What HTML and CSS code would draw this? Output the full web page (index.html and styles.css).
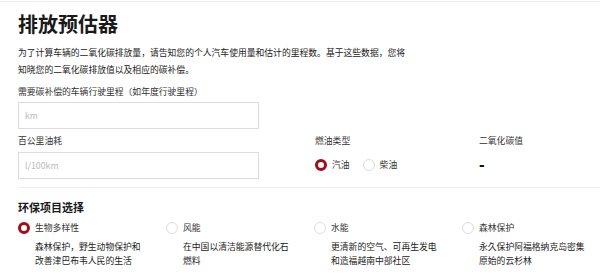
FILE: index.html
```html
<!DOCTYPE html>
<html lang="zh-CN">
<head>
<meta charset="utf-8">
<title>排放预估器</title>
<link rel="stylesheet" href="styles.css">
</head>
<body>
<div class="page">
  <h1 class="title">排放预估器</h1>
  <p class="intro">为了计算车辆的二氧化碳排放量，请告知您的个人汽车使用量和估计的里程数。基于这些数据，您将知晓您的二氧化碳排放值以及相应的碳补偿。</p>

  <div class="field">
    <div class="label">需要碳补偿的车辆行驶里程（如年度行驶里程）</div>
    <input class="input" type="text" placeholder="km">
  </div>

  <div class="row">
    <div class="field field-second">
      <div class="label">百公里油耗</div>
      <input class="input input-second" type="text" placeholder="l/100km">
    </div>
    <div class="col-fuel">
      <div class="label">燃油类型</div>
      <div class="radios">
        <span class="radio-item"><span class="radio radio-on"></span><span class="radio-text">汽油</span></span>
        <span class="radio-item"><span class="radio"></span><span class="radio-text">柴油</span></span>
      </div>
    </div>
    <div class="col-co2">
      <div class="label">二氧化碳值</div>
      <div class="co2-value">-</div>
    </div>
  </div>

  <div class="divider"></div>

  <h2 class="section-title">环保项目选择</h2>
  <div class="options">
    <div class="option">
      <div class="option-head"><span class="radio radio-on"></span><span class="option-name">生物多样性</span></div>
      <div class="option-desc">森林保护，野生动物保护和改善津巴布韦人民的生活</div>
    </div>
    <div class="option">
      <div class="option-head"><span class="radio"></span><span class="option-name">风能</span></div>
      <div class="option-desc">在中国以清洁能源替代化石燃料</div>
    </div>
    <div class="option">
      <div class="option-head"><span class="radio"></span><span class="option-name">水能</span></div>
      <div class="option-desc">更清新的空气、可再生发电和造福越南中部社区</div>
    </div>
    <div class="option">
      <div class="option-head"><span class="radio"></span><span class="option-name">森林保护</span></div>
      <div class="option-desc">永久保护阿福格纳克岛密集原始的云杉林</div>
    </div>
  </div>
</div>
</body>
</html>
```

FILE: styles.css
```css
html, body {
  margin: 0;
  padding: 0;
  background: #ffffff;
  overflow: hidden;
}

body {
  font-family: "Noto Sans CJK SC", "Noto Sans", "Liberation Sans", sans-serif;
  color: #222222;
  border-top: 1px solid #eeeeee;
  margin-top: 1px;
}

.page {
  width: 592px;
  padding: 10px 0 0 18px;
}

.title {
  margin: 0;
  font-size: 20px;
  line-height: 24px;
  font-weight: 700;
  color: #1a1a1a;
}

.intro {
  margin: 8px 0 0;
  width: 392px;
  font-size: 8.8px;
  line-height: 17px;
  color: #222222;
}

.label {
  font-size: 8.8px;
  line-height: 14px;
  color: #333333;
}

.field {
  display: flex;
  flex-direction: column;
  margin-top: 7px;
}

.input {
  box-sizing: border-box;
  width: 241px;
  height: 27px;
  margin-top: 3px;
  padding: 0 6px;
  border: 1px solid #dddddd;
  border-radius: 0;
  font-family: "Noto Sans CJK SC", "Noto Sans", "Liberation Sans", sans-serif;
  font-size: 8.8px;
  color: #333333;
  background: #ffffff;
  outline: none;
}

.input::placeholder {
  color: #bbbbbb;
}

.row {
  display: grid;
  grid-template-columns: 297px 164px 1fr;
  margin-top: 5px;
}

.field-second {
  margin-top: 0;
}

.input-second {
  margin-top: 4px;
}

.radios {
  display: flex;
  gap: 13px;
  margin-top: 10px;
}

.radio-item {
  display: flex;
  align-items: center;
  gap: 5px;
}

.radio {
  box-sizing: border-box;
  display: inline-block;
  width: 12px;
  height: 12px;
  border-radius: 50%;
  border: 1px solid #dcdcdc;
  background: #ffffff;
  flex: none;
}

.radio-on {
  border: 3px solid #a20d1b;
}

.radio-text {
  font-size: 8.8px;
  line-height: 14px;
  color: #333333;
}

.co2-value {
  margin-top: 9px;
  font-family: "Liberation Sans", sans-serif;
  font-size: 17px;
  line-height: 16px;
  font-weight: 700;
  color: #111111;
}

.divider {
  height: 1px;
  background: #eeeeee;
  margin-top: 8px;
  width: 600px;
}

.section-title {
  margin: 11px 0 0;
  font-size: 11px;
  line-height: 16px;
  font-weight: 700;
  color: #1a1a1a;
}

.options {
  display: grid;
  grid-template-columns: repeat(4, 148px);
  margin-top: 6px;
}

.option-head {
  display: flex;
  align-items: center;
  gap: 5px;
}

.option-name {
  font-size: 8.8px;
  line-height: 14px;
  color: #333333;
}

.option-desc {
  margin-top: 5px;
  padding-left: 17px;
  width: 110px;
  font-size: 8.8px;
  line-height: 14px;
  color: #222222;
}
```
